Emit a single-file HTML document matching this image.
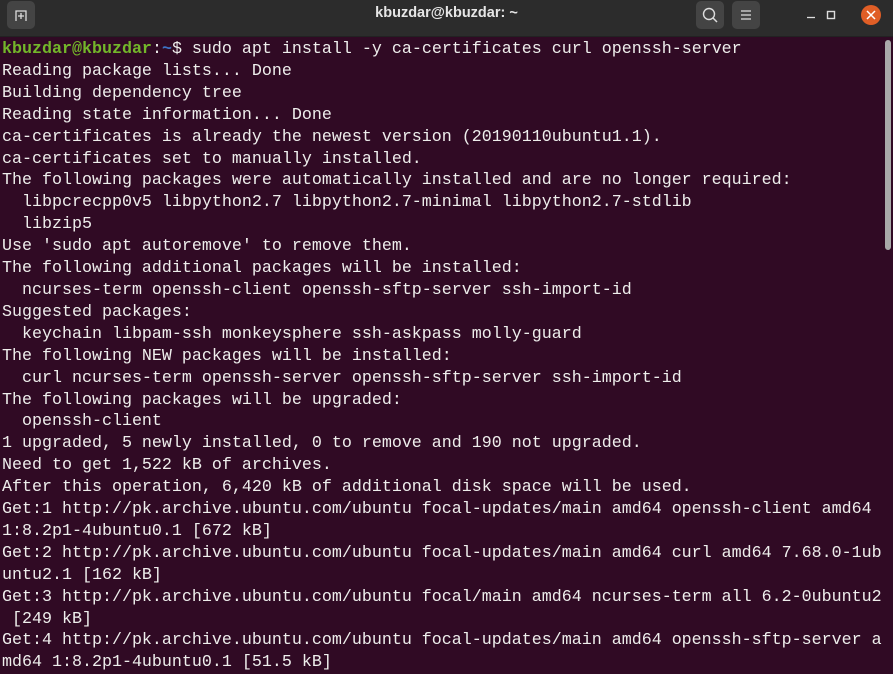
<!DOCTYPE html>
<html><head><meta charset="utf-8"><style>
html,body{margin:0;padding:0;width:893px;height:669px;overflow:hidden;background:#300a24}
.bar{position:absolute;left:0;top:0;width:893px;height:36px;background:#2c2c2c;border-bottom:1px solid #222}
.title{position:absolute;left:0;right:0;top:5px;line-height:20px;text-align:center;color:#e6e6e6;font:bold 14.5px "Liberation Sans",sans-serif}
.btn{position:absolute;top:1px;width:28px;height:28px;background:#444;border-radius:5px}
pre{position:absolute;left:2px;top:39px;margin:0;font-family:"Liberation Mono",monospace;font-size:16.67px;line-height:21.9px;color:#eeeeec;white-space:pre}
.g{color:#73b62a;font-weight:bold}.b{color:#3d72c4;font-weight:bold}
.sb{position:absolute;left:885px;top:40px;width:6px;height:210px;background:#a9a9a9;border-radius:3px}
</style></head><body>
<div class="bar">
<div class="btn" style="left:7px"><svg width="28" height="28"><path d="M9 20V10h10v10" fill="none" stroke="#ddd" stroke-width="1.3"/><path d="M14 12v6M11 15h6" stroke="#ddd" stroke-width="1.3"/></svg></div>
<div class="title">kbuzdar@kbuzdar: ~</div>
<div class="btn" style="left:696px"><svg width="28" height="28"><circle cx="13" cy="13" r="5.5" fill="none" stroke="#ddd" stroke-width="1.4"/><path d="M17 17l4 4" stroke="#ddd" stroke-width="1.5"/></svg></div>
<div class="btn" style="left:732px"><svg width="28" height="28"><path d="M9 10h10M9 14h10M9 18h10" stroke="#ddd" stroke-width="1.3"/></svg></div>
<svg style="position:absolute;left:780px;top:0" width="113" height="32"><path d="M27 17.5h8" stroke="#ddd" stroke-width="1.3"/><rect x="47.5" y="11.5" width="7" height="7" fill="none" stroke="#ddd" stroke-width="1.4"/><circle cx="91" cy="15" r="10" fill="#e05e26"/><path d="M87 11l8 8M95 11l-8 8" stroke="#fff" stroke-width="1.5"/></svg>
</div>
<div class="sb"></div>
<pre><span class="g">kbuzdar@kbuzdar</span>:<span class="b">~</span>$ sudo apt install -y ca-certificates curl openssh-server
Reading package lists... Done
Building dependency tree
Reading state information... Done
ca-certificates is already the newest version (20190110ubuntu1.1).
ca-certificates set to manually installed.
The following packages were automatically installed and are no longer required:
  libpcrecpp0v5 libpython2.7 libpython2.7-minimal libpython2.7-stdlib
  libzip5
Use 'sudo apt autoremove' to remove them.
The following additional packages will be installed:
  ncurses-term openssh-client openssh-sftp-server ssh-import-id
Suggested packages:
  keychain libpam-ssh monkeysphere ssh-askpass molly-guard
The following NEW packages will be installed:
  curl ncurses-term openssh-server openssh-sftp-server ssh-import-id
The following packages will be upgraded:
  openssh-client
1 upgraded, 5 newly installed, 0 to remove and 190 not upgraded.
Need to get 1,522 kB of archives.
After this operation, 6,420 kB of additional disk space will be used.
Get:1 http://pk.archive.ubuntu.com/ubuntu focal-updates/main amd64 openssh-client amd64
1:8.2p1-4ubuntu0.1 [672 kB]
Get:2 http://pk.archive.ubuntu.com/ubuntu focal-updates/main amd64 curl amd64 7.68.0-1ub
untu2.1 [162 kB]
Get:3 http://pk.archive.ubuntu.com/ubuntu focal/main amd64 ncurses-term all 6.2-0ubuntu2
 [249 kB]
Get:4 http://pk.archive.ubuntu.com/ubuntu focal-updates/main amd64 openssh-sftp-server a
md64 1:8.2p1-4ubuntu0.1 [51.5 kB]</pre>
</body></html>
